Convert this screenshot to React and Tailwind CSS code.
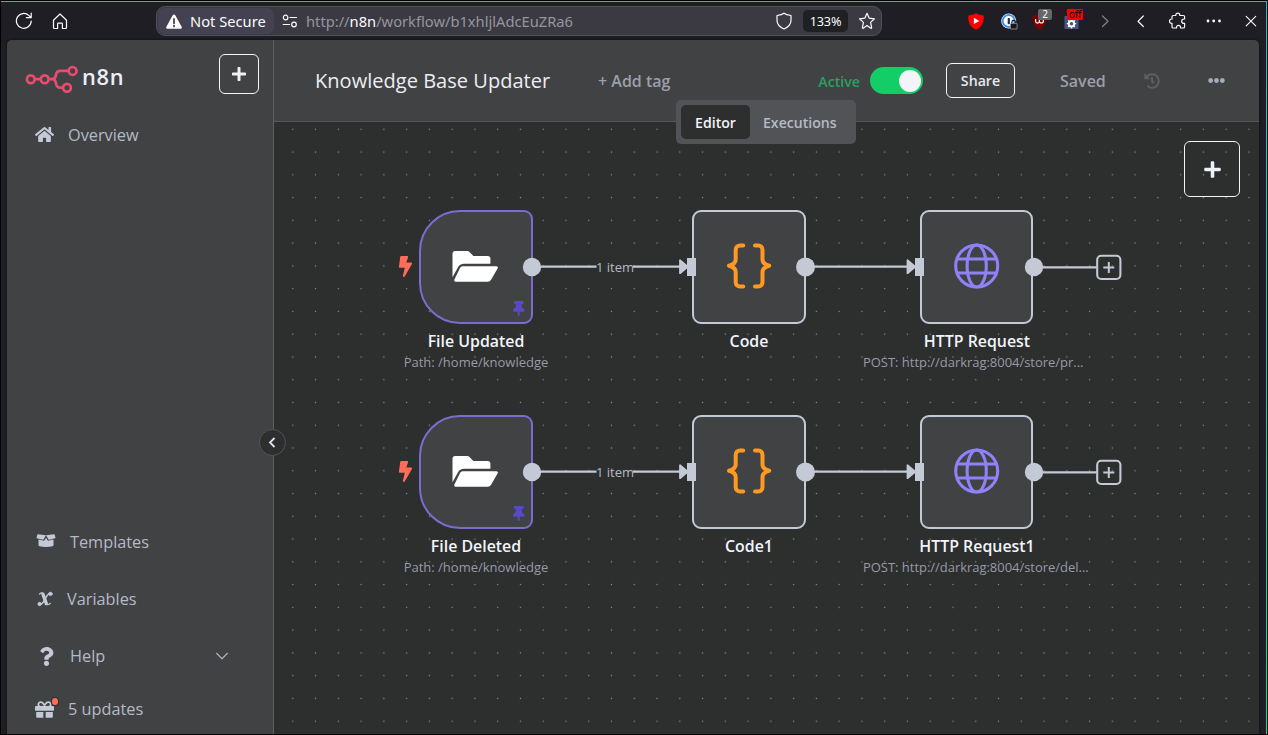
import React from 'react';
import {
  FaHome,
  FaQuestion,
  FaGift,
  FaBolt,
  FaThumbtack,
  FaHistory,
  FaEllipsisH,
  FaPlus,
} from 'react-icons/fa';

/* ---------- browser toolbar ---------- */

function Ico({ className = '', children, size = 18 }) {
  return (
    <svg
      width={size}
      height={size}
      viewBox={`0 0 ${size} ${size}`}
      fill="none"
      stroke="#fbfbfe"
      strokeWidth="1.2"
      strokeLinecap="round"
      strokeLinejoin="round"
      className={`shrink-0 ${className}`}
    >
      {children}
    </svg>
  );
}

function AddressBar() {
  return (
    <div className="ml-[87px] flex h-[30px] w-[726px] shrink-0 items-center rounded-[9px] border border-[#504f58] bg-[#3b3a42]">
      <div className="ml-px flex h-[26px] w-[116px] shrink-0 items-center rounded-[7px] bg-[#444250] pl-[8px]">
        <svg width="16" height="15" viewBox="0 0 16 15" className="shrink-0">
          <path d="M8 .4c.6 0 1 .3 1.300.8l6.300 11.500c.6 1.100-.1 2.100-1.200 2.100H1.600C.5 14.800-.2 13.800.4 12.700L6.700 1.200C7 .7 7.400.4 8 .4z" fill="#fbfbfe" />
          <path d="M8 4.800v4.500M8 11.500v1" stroke="#3c3a48" strokeWidth="1.700" strokeLinecap="round" />
        </svg>
        <span className="ml-[8px] whitespace-nowrap text-[14.7px] leading-5 text-[#fbfbfe]">Not Secure</span>
      </div>
      <svg width="16" height="14" viewBox="0 0 16 14" fill="none" stroke="#fbfbfe" strokeWidth="1.200" strokeLinecap="round" className="ml-[8px] shrink-0">
        <circle cx="3.600" cy="3.500" r="2.300" />
        <path d="M8 3.500h6.500M1.200 10.500h6.500" />
        <circle cx="12" cy="10.500" r="2.300" />
      </svg>
      <span className="ml-[8px] grow whitespace-nowrap text-[14.7px] leading-5 text-[#96959e]">
        http://<span className="text-[#fbfbfe]">n8n</span>/workflow/b1xhljlAdcEuZRa6
      </span>
      <Ico className="mr-[10px]">
        <path d="M9 1.200C7.400 2.600 4.800 3.200 2 3.500v4.500c0 4 3 7.300 7 9 4-1.700 7-5 7-9V3.500C13.200 3.200 10.600 2.600 9 1.200z" />
      </Ico>
      <div className="flex h-[22px] w-[45px] shrink-0 items-center justify-center rounded-[5px] bg-[#1e2023] text-[12.700px] leading-4 tracking-[-0.2px] text-[#fbfbfe]">133%</div>
      <Ico className="mr-[5px] ml-[10px]">
        <path d="M9 1.300l2.200 4.900 5.300.6-3.900 3.600 1 5.300a.6.600 0 01-.8.600L9 13.600l-3.800 2.700a.6.600 0 01-.8-.6l1-5.300L1.500 6.800l5.300-.6z" />
      </Ico>
    </div>
  );
}

function Toolbar() {
  return (
    <div className="flex h-[38px] shrink-0 items-center pl-[14px]">
      <Ico>
        <path d="M16.200 9A7.400 7.400 0 1 1 14 3.600l1.900 1.900M16.200 1v4.700h-4.800" />
      </Ico>
      <Ico className="ml-[18px]">
        <path d="M2.500 8.200L9 2l6.500 6.200v7.400a.9.900 0 01-.9.900h-3.200v-4.500a.8.800 0 00-.8-.8H7.400a.8.800 0 00-.8.800v4.500H3.400a.9.900 0 01-.9-.9z" />
      </Ico>
      <AddressBar />
      <svg width="16" height="17" viewBox="0 0 16 17" className="ml-[86px] shrink-0">
        <path d="M8 .3c2.500 1.500 5 2 7.800 2.100.2 6-1.300 11.200-7.800 14.300C1.500 13.600 0 8.400.2 2.400 3 2.300 5.500 1.800 8 .3z" fill="#f00" />
        <path d="M5.900 4.800v6.200l5.300-3.100z" fill="#fff" />
      </svg>
      <svg width="17" height="17" viewBox="0 0 17 17" className="ml-[17px] shrink-0">
        <circle cx="7.700" cy="8" r="7.500" fill="#fff" />
        <circle cx="7.700" cy="8" r="6" fill="none" stroke="#3f94f0" strokeWidth="1.900" />
        <rect x="6.700" y="5" width="2.200" height="6.300" rx=".8" fill="#14305c" />
        <rect x="9.300" y="10.300" width="6.800" height="5.700" rx=".8" fill="#17171b" stroke="#eee" strokeWidth=".5" />
        <path d="M10.900 10.300V9a1.700 1.700 0 013.400 0v1.300" stroke="#17171b" strokeWidth="1.200" fill="none" />
      </svg>
      <div className="relative ml-[14px] h-[17px] w-[15px] shrink-0">
        <svg width="15" height="17" viewBox="0 0 15 17">
          <path d="M7.500 .6c2 1.300 4 1.800 6.900 1.900C14.600 9 13 13.500 7.500 16.500 2 13.500.4 9 .6 2.500 3.500 2.400 5.500 1.900 7.500.6z" fill="#800000" />
          <path d="M3.600 6v2.200a1.900 1.900 0 003.800 0V6.500m0 1.700a2 2 0 104-.4 1.900 1.900 0 00-2-1.700" fill="none" stroke="#fff" strokeWidth="1.200" />
        </svg>
        <div className="absolute top-[-4px] left-[6px] flex h-[11px] w-[14px] items-center justify-center rounded-[2px] bg-[#666] text-[10px] leading-none text-white">2</div>
      </div>
      <div className="relative ml-[17px] h-[17px] w-[15px] shrink-0">
        <svg width="15" height="17" viewBox="0 0 15 17">
          <path d="M.5 3h14v13H.5z" fill="#4c5088" />
          <path d="M7.500 6v9.400M2.800 10.700h9.400M4.200 7.400l6.600 6.600M10.800 7.400l-6.600 6.600" stroke="#fff" strokeWidth="1.300" />
          <circle cx="7.500" cy="10.700" r="2.800" fill="none" stroke="#fff" strokeWidth="1.800" />
          <circle cx="7.500" cy="10.700" r="1.700" fill="#4c5088" />
        </svg>
        <div className="absolute top-[-4px] left-[3px] flex h-[11px] w-[16px] items-center justify-center rounded-[1px] bg-[#f00] text-[10.500px] leading-none tracking-[-0.3px] text-black">off</div>
      </div>
      <Ico className="ml-[17px] opacity-45"><path d="M6.500 4l5.500 5.300-5.500 5.200" /></Ico>
      <Ico className="ml-[18px]"><path d="M11.300 4L6 9.300l5.300 5.200" /></Ico>
      <Ico className="ml-[19px]">
        <path d="M4.300 3.500h2.500v-.3a2 2 0 014 0v.3h3.500a1.300 1.300 0 011.300 1.300V7h-.7a2.200 2.200 0 000 4.400h.7v3.300a1.300 1.300 0 01-1.300 1.300h-2.800v-.6a2 2 0 00-4 0v.6H4.300A1.300 1.300 0 013 14.700v-3.300h-.3a2.200 2.200 0 010-4.400H3V4.800a1.300 1.300 0 011.300-1.300z" />
      </Ico>
      <Ico className="ml-[18px]">
        <g fill="#fbfbfe" stroke="none">
          <circle cx="3" cy="9" r="1.400" /><circle cx="8.700" cy="9" r="1.400" /><circle cx="14.500" cy="9" r="1.400" />
        </g>
      </Ico>
      <Ico className="ml-[19px]"><path d="M4.200 4.400l9.500 9.500M13.700 4.400l-9.500 9.500" strokeWidth="1.100" /></Ico>
    </div>
  );
}

/* ---------- sidebar ---------- */

function Logo() {
  return (
    <svg width="53" height="30" viewBox="25 64 53 30" fill="none" stroke="#ea4b71" strokeWidth="2.700">
      <circle cx="30.800" cy="79.200" r="3.900" />
      <circle cx="44.700" cy="79.200" r="3.900" />
      <circle cx="72.600" cy="70.900" r="3.900" />
      <circle cx="67" cy="87.700" r="3.900" />
      <path d="M34.700 79.200h6.100M48.600 79.200h3.600c2.600 0 3.300-1.600 3.700-4 .5-2.800 1.600-4.300 4.200-4.300h8.600M52.200 79.200c2.600 0 3.300 1.500 3.800 4.200.5 2.700 1.600 4.300 4.200 4.300h2.900" />
    </svg>
  );
}

function BoxIcon() {
  return (
    <svg width="20" height="16" viewBox="0 0 20 16" fill="#c3c9d5">
      <path d="M2 1.200L10 2.200 7.600 6.300a.9.900 0 01-1 .4L1 5.300a.6.600 0 01-.4-.9L1.400 1.600a.6.600 0 01.6-.4z" />
      <path d="M18 1.200L10 2.200l2.400 4.100a.9.900 0 001 .4L19 5.300a.6.600 0 00.4-.9l-.8-2.800a.6.600 0 00-.6-.4z" />
      <path d="M2.500 6.500l4.400 1.100c.8.200 1.500-.1 1.900-.8L10 4.800l1.200 2c.4.700 1.100 1 1.900.8l4.400-1.100v5.400a1.300 1.300 0 01-1 1.300c-4.300 1.100-8.700 1.100-13 0a1.300 1.300 0 01-1-1.300z" />
    </svg>
  );
}

function VariableIcon() {
  return (
    <svg width="16" height="16" viewBox="0 0 16 16" fill="none" stroke="#c3c9d5" strokeLinecap="round">
      <path d="M2.600 3C4.600 1.200 6 1.600 6.800 4.500l1.700 6.500c.7 2.600 2.400 3.300 4.800 1.500" strokeWidth="1.300" />
      <path d="M6 3.200L9.300 12.600" strokeWidth="3.400" />
      <path d="M13.800 2.200C11 1.600 9.600 5 8 8.200c-1.600 3.400-3 5.600-5.900 5.200" strokeWidth="1.500" />
      <circle cx="13.500" cy="2.900" r="1.700" fill="#c3c9d5" strokeWidth=".8" />
      <circle cx="2.600" cy="13" r="1.700" fill="#c3c9d5" strokeWidth=".8" />
    </svg>
  );
}

function MenuItem({ icon, label, className = '', gap = 'ml-[13px]', children }) {
  return (
    <div className={`flex h-6 items-center text-[#b5bac6] ${className}`}>
      <span className="flex w-5 shrink-0 justify-center text-[#c3c9d5]">{icon}</span>
      <span className={`${gap} whitespace-nowrap text-[16.300px] leading-6`}>{label}</span>
      {children}
    </div>
  );
}

function Sidebar() {
  return (
    <aside className="relative flex w-[267px] shrink-0 flex-col border-r border-[#5d5e60] bg-[#414244]">
      <div className="flex items-start pt-[14px] pl-[18px]">
        <div className="mt-[10px]"><Logo /></div>
        <span className="mt-[8px] ml-[4px] text-[21.800px] leading-[30px] font-semibold tracking-[0.700px] text-[#eceef5]">n8n</span>
        <button className="ml-auto mr-[14px] flex size-10 items-center justify-center rounded-[6px] border border-[#f2f4fa] text-[#eef0f7]">
          <FaPlus size={16} />
        </button>
      </div>
      <MenuItem className="mt-[29px] pl-[27px]" icon={<FaHome size={19} className="mb-[2px]" />} gap="ml-[14px]" label="Overview" />
      <MenuItem className="mt-[383px] pl-[29px]" icon={<span className="mb-[3px]"><BoxIcon /></span>} gap="ml-[14px]" label="Templates" />
      <MenuItem className="mt-[33px] pl-[28px]" icon={<VariableIcon />} gap="ml-[12px]" label="Variables" />
      <MenuItem className="mt-[33px] pl-[29px]" icon={<FaQuestion size={19} />} gap="ml-[14px]" label="Help">
        <svg width="14" height="8" viewBox="0 0 14 8" fill="none" stroke="#b5bac6" strokeWidth="1.100" className="mr-[44px] ml-auto">
          <path d="M1.300 1L7 6.700 12.700 1" />
        </svg>
      </MenuItem>
      <MenuItem
        className="mt-[29px] pl-[27px]"
        icon={
          <span className="relative">
            <FaGift size={19} />
            <span className="absolute top-[-2px] right-[-4px] h-[7px] w-[6px] rounded-full bg-[#ff6d5a] ring-1 ring-[#2d2e2e]" />
          </span>
        }
        gap="ml-[14px]"
        label="5 updates"
      />
      <div className="absolute top-[389px] right-[-13px] z-10 flex size-[27px] items-center justify-center rounded-full border border-[#525356] bg-[#2d2e2e]">
        <svg width="8" height="11" viewBox="0 0 8 11" fill="none" stroke="#dfe2ec" strokeWidth="1.800" className="mr-[2px]">
          <path d="M6.500 1L2 5.500 6.500 10" />
        </svg>
      </div>
    </aside>
  );
}

/* ---------- header ---------- */

function Header() {
  return (
    <header className="relative flex h-[82px] shrink-0 items-center border-b border-[#57585a] bg-[#414244]">
      <h1 className="ml-[41px] w-[235px] shrink-0 whitespace-nowrap text-[20px] leading-7 tracking-[0.030px] text-[#eceef5]">Knowledge Base Updater</h1>
      <span className="ml-[48px] whitespace-nowrap text-[16px] leading-6 font-semibold text-[#9b9fac]">+ Add tag</span>
      <span className="mt-[3px] mr-[10px] ml-auto text-[14.200px] leading-5 font-semibold text-[#2e9e60]">Active</span>
      <div className="flex h-[27px] w-[53px] shrink-0 items-center justify-end rounded-full bg-[#13ce66] pr-[2px]">
        <div className="size-[22px] rounded-full bg-[#f2f4fa]" />
      </div>
      <button className="ml-[23px] h-[35px] w-[69px] shrink-0 rounded-[6px] border border-[#f2f4fa] text-[14.200px] leading-5 font-semibold text-[#e6e9f2]">Share</button>
      <span className="ml-[45px] w-[47px] shrink-0 text-[16px] leading-6 font-semibold text-[#9b9fac]">Saved</span>
      <FaHistory size={16} className="mr-[48px] ml-[37px] shrink-0 text-[#5d5e60]" />
      <FaEllipsisH size={17} className="mr-[34px] shrink-0 text-[#a5abb9]" />
      <div className="absolute top-[60px] left-[402px] z-10 flex h-[44px] w-[180px] items-center rounded-[5px] bg-[#525356] pl-[5px] text-[14.100px] leading-[22px] font-semibold">
        <div className="flex h-[34px] w-[69px] items-center justify-center rounded-[5px] bg-[#2d2e2e] pt-px text-[#f2f4fa]">Editor</div>
        <div className="ml-[13px] pt-px text-[#b5bac6]">Executions</div>
      </div>
    </header>
  );
}

/* ---------- canvas ---------- */

function FolderIcon() {
  return (
    <svg width="46" height="31" viewBox="0 0 46 31" fill="#fff">
      <path d="M2.800 0h12.700c.7 0 1.200.2 1.700.7l4.200 4.200h14.300a2.700 2.700 0 012.700 2.700v5.200H12.200c-3 0-5 1.300-6.300 3.600L.5 26.200V2.600A2.500 2.500 0 012.800 0z" />
      <path d="M10.600 15.200h33.900a1.400 1.400 0 011.200 2.100l-6.600 11.400a4 4 0 01-3.500 2H3.600a1.400 1.400 0 01-1.200-2.100l5.600-11.600a2.900 2.900 0 012.600-1.800z" />
    </svg>
  );
}

function BracesIcon() {
  return (
    <svg width="46" height="46" viewBox="0 0 46 46" fill="none" stroke="#ff9922" strokeWidth="4" strokeLinecap="round" strokeLinejoin="round">
      <path d="M17.200 2.500h-3.300a4.200 4.200 0 00-4.200 4.200v9.800c0 2.800-2 5-6.700 6.200 4.700 1.200 6.700 3.400 6.700 6.200v10.400a4.200 4.200 0 004.200 4.200h3.300" />
      <path d="M29 2.500h3.300a4.200 4.200 0 014.200 4.200v9.800c0 2.800 2 5 6.700 6.200-4.700 1.200-6.700 3.400-6.700 6.200v10.400a4.200 4.200 0 01-4.200 4.200H29" />
    </svg>
  );
}

function GlobeIcon() {
  return (
    <svg width="46" height="46" viewBox="0 0 46 46" fill="none" stroke="#9081f8" strokeWidth="3.100">
      <circle cx="22.700" cy="23" r="21" />
      <ellipse cx="22.700" cy="23" rx="9.600" ry="21" />
      <path d="M2.900 16h39.600M2.900 30h39.600" />
    </svg>
  );
}

function Label({ title, sub, subClass = 'justify-center' }) {
  return (
    <div className="absolute top-[120px] left-[-56px] w-[226px]">
      <div className="text-center whitespace-nowrap text-[15.900px] leading-[22px] font-semibold text-[#f2f4fa]">{title}</div>
      {sub && <div className={`flex whitespace-nowrap text-[13px] leading-[21px] text-[#979ba7] ${subClass}`}>{sub}</div>}
    </div>
  );
}

function Row({ className, names, request }) {
  return (
    <div className={`absolute left-0 ${className}`}>
      <FaBolt size={21} className="absolute top-[46px] left-[121px] text-[#ff6d5a]" />
      <div className="absolute top-0 left-[145px] size-[114px]">
        <div className="flex size-[114px] items-center justify-center rounded-[9px] rounded-l-[41px] border-2 border-[#7c6cd0] bg-[#414244] pr-[2px] pb-px">
          <FolderIcon />
        </div>
        <FaThumbtack size={15.5} className="absolute top-[90.500px] left-[92px] text-[#584ac4]" />
        <Label title={names[0]} sub="Path: /home/knowledge" />
      </div>
      <div className="absolute top-0 left-[418px] size-[114px]">
        <div className="flex size-[114px] items-center justify-center rounded-[9px] border-2 border-[#c3c9d5] bg-[#414244] pb-[2px]"><BracesIcon /></div>
        <Label title={names[1]} />
      </div>
      <div className="absolute top-0 left-[646px] size-[113px]">
        <div className="flex h-[114px] w-[113px] items-center justify-center rounded-[9px] border-2 border-[#c3c9d5] bg-[#414244] pb-[2px]"><GlobeIcon /></div>
        <Label title={names[2]} sub={request} subClass="-ml-px tracking-[-0.03px]" />
      </div>
      <svg width="740" height="40" viewBox="530 247 740 40" className="absolute top-[37px] left-[256px] overflow-visible">
        <g stroke="#c3c9d5" strokeWidth="2.300" fill="#c3c9d5">
          <path d="M541 266.600h55.500M633 266.600h47M814 266.600h93M1042 267.300h54.500" />
          <g stroke="none">
            <circle cx="532" cy="267" r="9.200" />
            <circle cx="805.500" cy="267" r="9.500" />
            <circle cx="1034" cy="267" r="9.200" />
            <path d="M687 258h9v18h-9zM915 258h9v18h-9z" />
          </g>
          <path d="M680 260.300v12.900l7.600-6.500zM907.500 260.300v12.900l7.600-6.500z" strokeWidth="1.800" strokeLinejoin="round" />
        </g>
        <rect x="1097.200" y="255.800" width="23.200" height="23.200" rx="4" fill="none" stroke="#c3c9d5" strokeWidth="2.100" />
        <path d="M1108.800 262v11M1103.300 267.500h11" stroke="#c3c9d5" strokeWidth="2" />
      </svg>
      <span className="absolute top-[47px] left-[322px] whitespace-nowrap text-[13px] leading-5 text-[#b5bac6]">1 item</span>
    </div>
  );
}

function Canvas() {
  return (
    <main className="relative grow overflow-hidden bg-[#2d2e2e]">
      <svg className="absolute inset-0 size-full">
        <defs>
          <pattern id="dots" x="7.400" y="-4.100" width="22.765" height="22.765" patternUnits="userSpaceOnUse">
            <circle cx="11.400" cy="11.400" r=".7" fill="#8d8f8f" />
          </pattern>
        </defs>
        <rect width="100%" height="100%" fill="url(#dots)" />
      </svg>
      <Row className="top-[88px]" names={['File Updated', 'Code', 'HTTP Request']} request="POST: http://darkrag:8004/store/pr..." />
      <Row className="top-[293px]" names={['File Deleted', 'Code1', 'HTTP Request1']} request="POST: http://darkrag:8004/store/del..." />
      <button className="absolute top-[19px] right-[19px] flex size-14 items-center justify-center rounded-[6px] border border-[#f2f4fa] text-[#eef0f7]">
        <FaPlus size={19} />
      </button>
    </main>
  );
}

export default function App() {
  return (
    <div className="flex h-[735px] w-[1268px] overflow-hidden bg-black pt-px pr-px pb-px pl-px">
      <div className="flex grow bg-gradient-to-b from-[#24b8d4] to-[#0ce091] pt-px pr-px">
        <div className="flex grow flex-col bg-[#1f1e25] font-['Noto_Sans',sans-serif]">
          <Toolbar />
          <div className="ml-[6px] flex w-[1252px] grow overflow-hidden rounded-t-[5px] font-['Open_Sans','Noto_Sans',sans-serif] shadow-[0_0_3px_#0a0a0e]">
            <Sidebar />
            <div className="flex grow flex-col">
              <Header />
              <Canvas />
            </div>
          </div>
        </div>
      </div>
    </div>
  );
}
